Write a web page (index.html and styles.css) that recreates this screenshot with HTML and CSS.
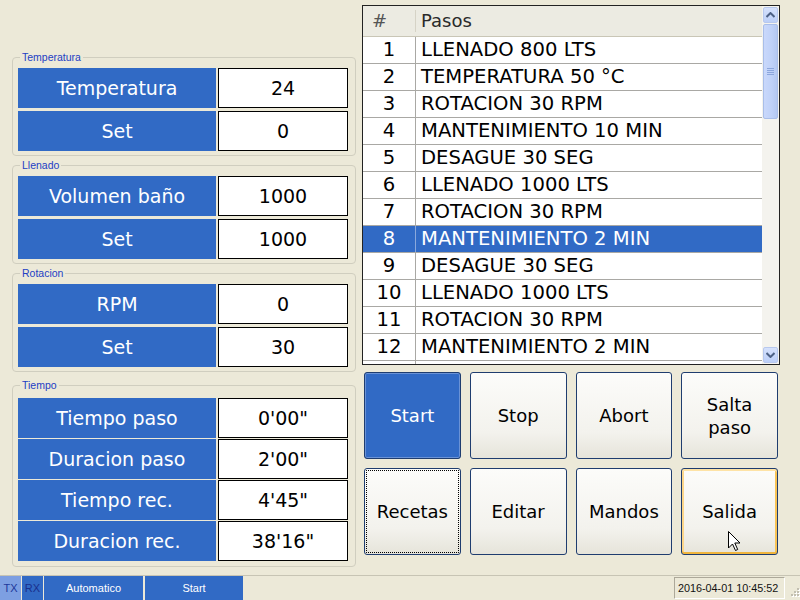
FILE: index.html
```html
<!DOCTYPE html>
<html lang="es">
<head>
<meta charset="utf-8">
<title>Control</title>
<link rel="stylesheet" href="styles.css">
</head>
<body>
<div class="app">
  <div class="main">
    <div class="left">
      <fieldset class="group">
        <legend>Temperatura</legend>
        <div class="row"><div class="lbl">Temperatura</div><div class="val">24</div></div>
        <div class="row"><div class="lbl">Set</div><div class="val">0</div></div>
      </fieldset>
      <fieldset class="group">
        <legend>Llenado</legend>
        <div class="row"><div class="lbl">Volumen baño</div><div class="val">1000</div></div>
        <div class="row"><div class="lbl">Set</div><div class="val">1000</div></div>
      </fieldset>
      <fieldset class="group">
        <legend>Rotacion</legend>
        <div class="row"><div class="lbl">RPM</div><div class="val">0</div></div>
        <div class="row"><div class="lbl">Set</div><div class="val">30</div></div>
      </fieldset>
      <fieldset class="group group-time">
        <legend>Tiempo</legend>
        <div class="row"><div class="lbl">Tiempo paso</div><div class="val">0'00"</div></div>
        <div class="row"><div class="lbl">Duracion paso</div><div class="val">2'00"</div></div>
        <div class="row"><div class="lbl">Tiempo rec.</div><div class="val">4'45"</div></div>
        <div class="row"><div class="lbl">Duracion rec.</div><div class="val">38'16"</div></div>
      </fieldset>
    </div>

    <div class="right">
      <div class="list">
        <div class="list-body">
          <div class="lhead"><div class="h-num">#</div><div class="h-txt">Pasos</div></div>
          <div class="lrow"><div class="c-num">1</div><div class="c-txt">LLENADO 800 LTS</div></div>
          <div class="lrow"><div class="c-num">2</div><div class="c-txt">TEMPERATURA 50 °C</div></div>
          <div class="lrow"><div class="c-num">3</div><div class="c-txt">ROTACION 30 RPM</div></div>
          <div class="lrow"><div class="c-num">4</div><div class="c-txt">MANTENIMIENTO 10 MIN</div></div>
          <div class="lrow"><div class="c-num">5</div><div class="c-txt">DESAGUE 30 SEG</div></div>
          <div class="lrow"><div class="c-num">6</div><div class="c-txt">LLENADO 1000 LTS</div></div>
          <div class="lrow"><div class="c-num">7</div><div class="c-txt">ROTACION 30 RPM</div></div>
          <div class="lrow selected"><div class="c-num">8</div><div class="c-txt">MANTENIMIENTO 2 MIN</div></div>
          <div class="lrow"><div class="c-num">9</div><div class="c-txt">DESAGUE 30 SEG</div></div>
          <div class="lrow"><div class="c-num">10</div><div class="c-txt">LLENADO 1000 LTS</div></div>
          <div class="lrow"><div class="c-num">11</div><div class="c-txt">ROTACION 30 RPM</div></div>
          <div class="lrow"><div class="c-num">12</div><div class="c-txt">MANTENIMIENTO 2 MIN</div></div>
          <div class="lrow"><div class="c-num"></div><div class="c-txt"></div></div>
        </div>
        <div class="vscroll">
          <div class="sb-btn"><svg width="9" height="6" viewBox="0 0 9 6"><path d="M0.5 5 L4.5 1 L8.5 5" fill="none" stroke="#4d6185" stroke-width="2"/></svg></div>
          <div class="sb-thumb"><span></span><span></span><span></span><span></span></div>
          <div class="sb-track"></div>
          <div class="sb-btn"><svg width="9" height="6" viewBox="0 0 9 6"><path d="M0.5 1 L4.5 5 L8.5 1" fill="none" stroke="#4d6185" stroke-width="2"/></svg></div>
        </div>
      </div>

      <div class="buttons">
        <div class="btn btn-active">Start</div>
        <div class="btn">Stop</div>
        <div class="btn">Abort</div>
        <div class="btn">Salta<br>paso</div>
        <div class="btn btn-focus">Recetas</div>
        <div class="btn">Editar</div>
        <div class="btn">Mandos</div>
        <div class="btn btn-hover">Salida
          <svg class="cursor" width="13" height="21" viewBox="0 0 13 21"><path d="M0.5 0.5 L0.5 17 L4.5 13 L7.5 19.5 L9.7 18.5 L6.8 12 L12 12 Z" fill="#fff" stroke="#000" stroke-width="1" stroke-linejoin="miter"/></svg>
        </div>
      </div>
    </div>
  </div>

  <div class="status">
    <div class="st st-tx">TX</div>
    <div class="st st-rx">RX</div>
    <div class="st st-mode">Automatico</div>
    <div class="st st-start">Start</div>
    <div class="st-fill"></div>
    <div class="st-date">2016-04-01 10:45:52</div>
    <div class="st-grip">
      <svg width="12" height="12" viewBox="0 0 12 12">
        <g fill="#fff"><rect x="10" y="2" width="2" height="2"/><rect x="7" y="5" width="2" height="2"/><rect x="10" y="5" width="2" height="2"/><rect x="4" y="8" width="2" height="2"/><rect x="7" y="8" width="2" height="2"/><rect x="10" y="8" width="2" height="2"/></g>
        <g fill="#c2bfb1"><rect x="9" y="1" width="2" height="2"/><rect x="6" y="4" width="2" height="2"/><rect x="9" y="4" width="2" height="2"/><rect x="3" y="7" width="2" height="2"/><rect x="6" y="7" width="2" height="2"/><rect x="9" y="7" width="2" height="2"/></g>
      </svg>
    </div>
  </div>
</div>
</body>
</html>
```

FILE: styles.css
```css
html, body {
  margin: 0;
  padding: 0;
}

body {
  background: #ece9d8;
  font-family: "DejaVu Sans", Verdana, sans-serif;
  color: #000;
}

.app {
  width: 800px;
  height: 600px;
  display: flex;
  flex-direction: column;
  overflow: hidden;
}

.main {
  flex: 1;
  display: flex;
  min-height: 0;
}

/* ---------- left column ---------- */
.left {
  width: 344px;
  margin-left: 12px;
  padding-top: 51px;
  display: flex;
  flex-direction: column;
  gap: 3px;
}

.group {
  margin: 0;
  padding: 5px 7px 4px 5px;
  border: 1px solid #d0cebf;
  border-radius: 4px;
  min-width: 0;
}

.group legend {
  font-family: "Liberation Sans", Arial, sans-serif;
  font-size: 10.5px;
  line-height: 12px;
  color: #2340c4;
  padding: 0 2px;
  margin-left: 2px;
}

.group-time {
  margin-top: 4px;
  padding-top: 7px;
  padding-bottom: 5px;
}

.row {
  display: flex;
  gap: 2px;
  height: 40px;
}

.row + .row {
  margin-top: 3px;
}

.group-time .row + .row {
  margin-top: 1px;
}

.lbl {
  width: 198px;
  background: #316ac5;
  color: #fff;
  font-size: 19px;
  display: flex;
  align-items: center;
  justify-content: center;
}

.val {
  width: 130px;
  box-sizing: border-box;
  border: 1px solid #000;
  background: #fff;
  font-size: 19px;
  display: flex;
  align-items: center;
  justify-content: center;
}

/* ---------- right column ---------- */
.right {
  width: 418px;
  margin-left: 6px;
  padding-top: 5px;
  display: flex;
  flex-direction: column;
}

.list {
  height: 360px;
  box-sizing: border-box;
  border: 1px solid #222;
  background: #fff;
  display: flex;
  overflow: hidden;
}

.list-body {
  flex: 1;
  overflow: hidden;
}

.lhead {
  display: flex;
  height: 31px;
  box-sizing: border-box;
  background: #ecebe2;
  border-bottom: 1px solid #c9c6b6;
  font-size: 18px;
  color: #2a2a2a;
  align-items: center;
}

.h-num {
  width: 53px;
  box-sizing: border-box;
  padding-left: 9px;
  color: #555;
  height: 22px;
  line-height: 22px;
  border-right: 1px solid #d6d3c6;
}

.h-txt {
  padding-left: 5px;
  line-height: 22px;
}

.lrow {
  display: flex;
  height: 27px;
  box-sizing: border-box;
  border-bottom: 1px solid #a9a8a4;
  font-size: 19.6px;
  line-height: 26px;
}

.c-num {
  width: 53px;
  box-sizing: border-box;
  border-right: 1px solid #a9a8a4;
  text-align: center;
}

.c-txt {
  padding-left: 5px;
  white-space: nowrap;
}

.lrow.selected {
  background: #316ac5;
  color: #fff;
}

.lrow.selected .c-num {
  border-right-color: #8aa8dc;
}

/* scrollbar */
.vscroll {
  width: 17px;
  box-sizing: border-box;
  padding: 1px;
  background: #f4f3ee;
  display: flex;
  flex-direction: column;
}

.sb-btn {
  height: 16px;
  box-sizing: border-box;
  border: 1px solid #b7c8ee;
  border-radius: 2px;
  background: linear-gradient(#d5e1fc, #bccff7);
  display: flex;
  align-items: center;
  justify-content: center;
}

.sb-thumb {
  height: 95px;
  margin-top: 1px;
  box-sizing: border-box;
  border: 1px solid #a9bee9;
  border-radius: 2px;
  background: linear-gradient(90deg, #c9d8fb, #bfd1f8 60%, #b4c8f2);
  display: flex;
  flex-direction: column;
  align-items: center;
  justify-content: center;
  gap: 1px;
}

.sb-thumb span {
  width: 7px;
  height: 1px;
  background: #8ca6dc;
}

.sb-track {
  flex: 1;
}

/* buttons */
.buttons {
  display: grid;
  grid-template-columns: repeat(4, 1fr);
  grid-auto-rows: 87px;
  gap: 9px;
  margin: 7px 2px 0 2px;
}

.btn {
  position: relative;
  box-sizing: border-box;
  border: 1px solid #1f3d6f;
  border-radius: 3px;
  background: linear-gradient(#fcfcfa, #f3f2ed 70%, #e6e4da);
  font-size: 18px;
  line-height: 23px;
  text-align: center;
  display: flex;
  align-items: center;
  justify-content: center;
}

.btn-active {
  background: #316ac5;
  color: #fff;
  box-shadow: inset 0 0 0 1px #6a92d6;
}

.btn-focus {
  outline: 1px dotted #000;
  outline-offset: -3px;
}

.btn-hover {
  box-shadow: inset 0 2px 0 #fee3a6, inset 0 -2px 0 #f0b53d, inset 2px 0 0 #fcd68a, inset -2px 0 0 #f8c457;
}

.cursor {
  position: absolute;
  left: 46px;
  top: 62px;
}

/* ---------- status bar ---------- */
.status {
  height: 25px;
  box-sizing: border-box;
  border-top: 1px solid #c7c4b4;
  display: flex;
  font-family: "Liberation Sans", Arial, sans-serif;
  font-size: 11px;
}

.st {
  display: flex;
  align-items: center;
  justify-content: center;
  background: #316ac5;
  color: #fff;
}

.st-tx {
  width: 21px;
  background: #7d9fe2;
  color: #20389a;
}

.st-rx {
  width: 21px;
  margin-left: 1px;
  color: #1a2f8c;
}

.st-mode {
  width: 99px;
  margin-left: 1px;
}

.st-start {
  width: 98px;
  margin-left: 2px;
}

.st-fill {
  flex: 1;
}

.st-date {
  width: 111px;
  box-sizing: border-box;
  margin: 1px 0 1px 0;
  border-top: 1px solid #aca899;
  border-left: 1px solid #aca899;
  border-right: 1px solid #fff;
  border-bottom: 1px solid #fff;
  font-size: 10.8px;
  color: #111;
  padding-left: 3px;
  display: flex;
  align-items: center;
  white-space: nowrap;
}

.st-grip {
  width: 15px;
  display: flex;
  align-items: flex-end;
  justify-content: flex-end;
  padding-bottom: 1px;
}
```
